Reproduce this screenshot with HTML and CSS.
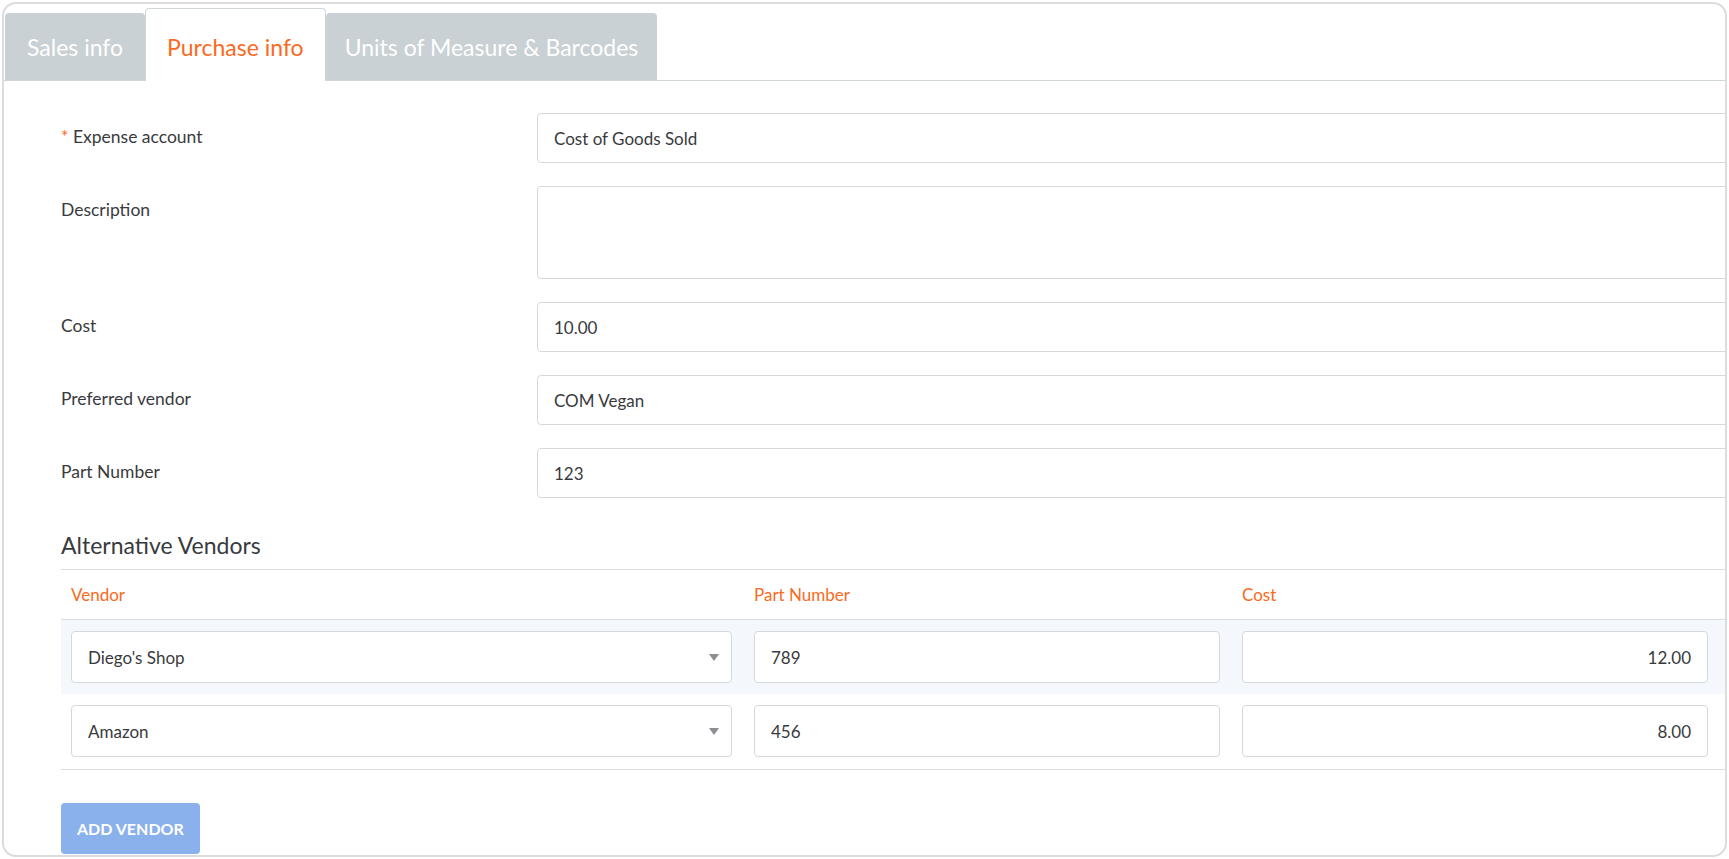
FILE: index.html
```html
<!DOCTYPE html>
<html lang="en">
  <head>
    <meta charset="UTF-8" />
    <meta name="viewport" content="width=device-width, initial-scale=1.0" />
    <title>Product - Purchase info</title>
    <link rel="stylesheet" href="styles.css">
  </head>
  <body>
    <div class="card">
      <div class="tabs">
        <div class="tab">Sales info</div>
        <div class="tab active">Purchase info</div>
        <div class="tab wide">Units of Measure &amp; Barcodes</div>
      </div>

      <div class="panel">
        <div class="form">
          <label class="label"><span class="req">*</span> Expense account</label>
          <input class="field" type="text" value="Cost of Goods Sold" />

          <label class="label">Description</label>
          <textarea class="field area"></textarea>

          <label class="label">Cost</label>
          <input class="field" type="text" value="10.00" />

          <label class="label">Preferred vendor</label>
          <input class="field" type="text" value="COM Vegan" />

          <label class="label">Part Number</label>
          <input class="field" type="text" value="123" />
        </div>

        <h3 class="section-title">Alternative Vendors</h3>

        <div class="vendors">
          <div class="vrow head">
            <div class="cell">Vendor</div>
            <div class="cell">Part Number</div>
            <div class="cell">Cost</div>
            <div class="cell"></div>
          </div>
          <div class="vrow hl">
            <div class="cell">
              <div class="select">Diego's Shop<span class="caret"></span></div>
            </div>
            <div class="cell"><input class="field" type="text" value="789" /></div>
            <div class="cell"><input class="field num" type="text" value="12.00" /></div>
            <div class="cell"></div>
          </div>
          <div class="vrow">
            <div class="cell">
              <div class="select">Amazon<span class="caret"></span></div>
            </div>
            <div class="cell"><input class="field" type="text" value="456" /></div>
            <div class="cell"><input class="field num" type="text" value="8.00" /></div>
            <div class="cell"></div>
          </div>
        </div>

        <button class="add-btn">Add vendor</button>
      </div>
    </div>
  </body>
</html>
```

FILE: styles.css
```css
body {
  margin: 2px;
  font-family: Lato, "Open Sans", sans-serif;
  color: #393a3d;
  background: #fff;
}
.card {
  box-sizing: border-box;
  height: calc(100vh - 4px);
  border: 2px solid #dcdcdc;
  border-radius: 14px;
  overflow: hidden;
}
.tabs {
  display: flex;
  align-items: flex-end;
  padding: 4px 0 0 1px;
  border-bottom: 1px solid #cfd6d9;
}
.tab {
  box-sizing: border-box;
  height: 67px;
  padding: 0 22px;
  display: flex;
  align-items: center;
  font-size: 23px;
  color: #fff;
  background: #c9d1d4;
  border-radius: 4px 4px 0 0;
}
.tab.wide {
  padding: 0 19px;
}
.tab.active {
  height: 73px;
  padding: 4px 21px 0;
  margin-bottom: -1px;
  background: #fff;
  color: #fa6a22;
  border: 1px solid #cfd6d9;
  border-bottom: none;
}
.panel {
  padding: 32px 0 0 57px;
  margin-right: -40px;
}
.form {
  display: grid;
  grid-template-columns: 476px 1fr;
  row-gap: 23px;
}
.label {
  font-size: 17.5px;
  line-height: 22px;
  padding-top: 13px;
}
.req {
  color: #fa6a22;
}
.field {
  box-sizing: border-box;
  width: 100%;
  height: 50px;
  padding: 0 16px;
  border: 1px solid #d4d9dc;
  border-radius: 4px;
  font-family: inherit;
  font-size: 17px;
  color: #393a3d;
  background: #fff;
  outline: none;
}
.field.area {
  height: 93px;
  resize: none;
}
.field.num {
  text-align: right;
}
.section-title {
  margin: 33px 0 0;
  font-size: 23px;
  font-weight: normal;
  line-height: 28px;
}
.vendors {
  margin-top: 10px;
  border-top: 1px solid #d9dde0;
  border-bottom: 1px solid #d9dde0;
}
.vrow {
  display: grid;
  grid-template-columns: 683px 488px 486px 1fr;
  padding: 11px 0 12px;
}
.vrow.head {
  padding: 0;
  height: 49px;
  align-items: center;
  border-bottom: 1px solid #d9dde0;
  color: #fa6a22;
  font-size: 17px;
}
.vrow.hl {
  padding-bottom: 11px;
  background: #f4f7fb;
}
.cell {
  padding: 0 10px;
}
.vrow .cell:first-child,
.vrow .cell:nth-child(2) {
  padding-right: 12px;
}
.select {
  box-sizing: border-box;
  height: 52px;
  padding: 0 12px 0 16px;
  display: flex;
  align-items: center;
  justify-content: space-between;
  border: 1px solid #d4d9dc;
  border-radius: 4px;
  background: #fff;
  font-size: 17px;
}
.vrow .field {
  height: 52px;
}
.caret {
  width: 0;
  height: 0;
  border-left: 5px solid transparent;
  border-right: 5px solid transparent;
  border-top: 7px solid #8a8d91;
}
.add-btn {
  margin-top: 33px;
  height: 51px;
  padding: 0 16px;
  border: none;
  border-radius: 4px;
  background: #8ab1ec;
  color: #fff;
  font-family: inherit;
  font-size: 16px;
  font-weight: bold;
  text-transform: uppercase;
}
```
